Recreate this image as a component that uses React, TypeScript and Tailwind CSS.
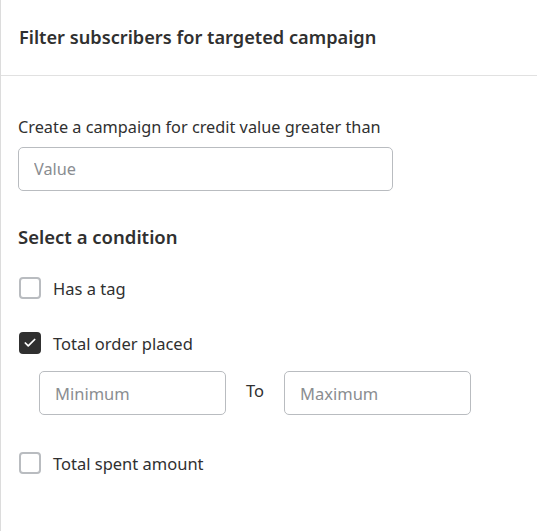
import { Check } from 'lucide-react';

function Box({ checked }: { checked?: boolean }) {
  if (checked) {
    return (
      <span className="w-[22px] h-[22px] rounded-[4px] bg-[#303030] flex items-center justify-center shrink-0">
        <Check className="w-[14px] h-[14px] text-white" strokeWidth={3} />
      </span>
    );
  }
  return <span className="w-[22px] h-[22px] rounded-[4px] border-2 border-[#b9bcc0] bg-white shrink-0" />;
}

export default function App() {
  return (
    <div
      className="min-h-screen bg-white border-l border-[#dcdcdc] text-[#303030]"
      style={{ fontFamily: '"Noto Sans", "Open Sans", sans-serif' }}
    >
      {/* Header */}
      <div className="h-[76px] flex items-center pl-[18px] pb-[2px] border-b border-[#e1e1e1]">
        <h1 className="text-[18.2px] leading-[24px] font-semibold">Filter subscribers for targeted campaign</h1>
      </div>

      <div className="pl-[17px] pt-[40px]">
        <p className="text-[16.3px] leading-[22px]">Create a campaign for credit value greater than</p>
        <input
          placeholder="Value"
          className="mt-[9px] w-[375px] h-[44px] px-[15px] rounded-[5px] border border-[#b9bcc0] text-[16.3px] placeholder:text-[#8a8d91] outline-none"
        />

        <h2 className="mt-[33px] text-[18.5px] leading-[26px] font-semibold">Select a condition</h2>

        <label className="mt-[27px] flex items-center gap-[12px] h-[22px] pl-[1px]">
          <Box />
          <span className="text-[16.5px] leading-[22px] pt-[2px]">Has a tag</span>
        </label>

        <label className="mt-[33px] flex items-center gap-[12px] h-[22px] pl-[1px]">
          <Box checked />
          <span className="text-[16.5px] leading-[22px] pt-[2px]">Total order placed</span>
        </label>

        <div className="mt-[17px] ml-[21px] flex items-center">
          <input
            placeholder="Minimum"
            className="w-[187px] h-[44px] px-[15px] rounded-[5px] border border-[#b9bcc0] text-[16.5px] placeholder:text-[#8a8d91] outline-none"
          />
          <span className="w-[58px] text-center text-[16.5px] -mt-[3px]">To</span>
          <input
            placeholder="Maximum"
            className="w-[187px] h-[44px] px-[15px] rounded-[5px] border border-[#b9bcc0] text-[16.5px] placeholder:text-[#8a8d91] outline-none"
          />
        </div>

        <label className="mt-[37px] flex items-center gap-[12px] h-[22px] pl-[1px]">
          <Box />
          <span className="text-[16.5px] leading-[22px] pt-[2px]">Total spent amount</span>
        </label>
      </div>
    </div>
  );
}
